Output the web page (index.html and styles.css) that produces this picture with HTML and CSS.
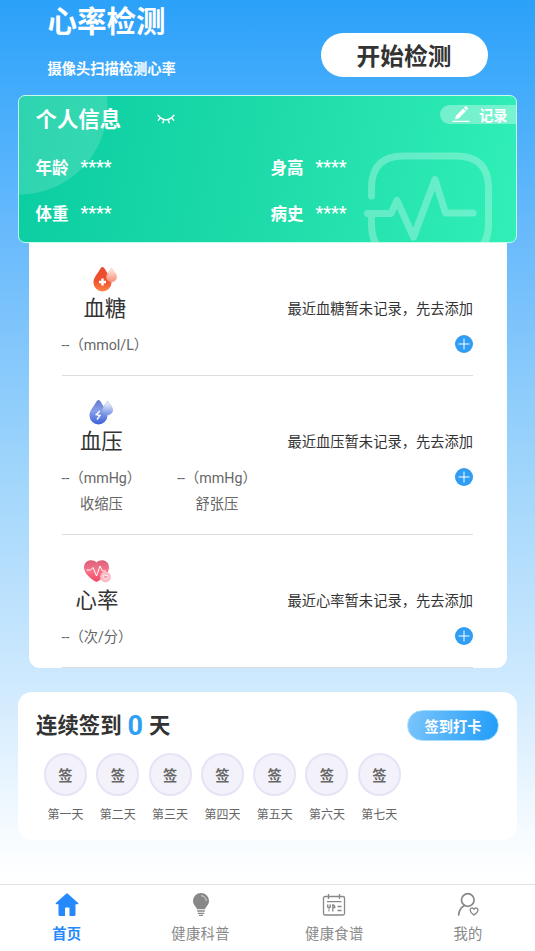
FILE: index.html
```html
<!DOCTYPE html>
<html lang="zh-CN">
<head>
<meta charset="utf-8">
<title>心率检测</title>
<link rel="stylesheet" href="styles.css">
</head>
<body>
<div class="app">
  <header class="header">
    <div>
      <h1 class="header-title">心率检测</h1>
      <p class="header-sub">摄像头扫描检测心率</p>
    </div>
    <button class="start">开始检测</button>
  </header>

  <section class="profile">
    <svg class="profile-art" viewBox="0 0 128 90" fill="none" stroke="#fff" stroke-opacity=".28" stroke-width="7" stroke-linecap="round" stroke-linejoin="round">
      <path d="M7.500 44V36Q7.500 4 39.500 4H92Q124.500 4 124.500 36V72Q124.500 104 92 104H39.500Q7.500 104 7.500 72V61.500H3.500M7.500 61.500H27L33 48.500L49.500 85L71 27.500L81.500 61H109"/>
    </svg>
    <div class="profile-head">
      <h2 class="profile-title">个人信息</h2>
      <svg class="eye" viewBox="0 0 18 11" fill="none" stroke="#fff" stroke-width="1.400" stroke-linecap="round"><path d="M1 1.300Q9 10.500 17 1.300M3.300 3.600L1.300 6.300M6.900 5.500L5.900 8.800M11.100 5.500L12.100 8.800M14.700 3.600L16.700 6.300"/></svg>
      <div class="record">
        <svg class="pen" viewBox="0 0 18 17"><path fill="#fff" d="M3 13.500L4 9.700L11.300 2.400L14 5.100L6.700 12.500ZM12 1.700L13.200.5Q14 0 14.700.7L15.800 1.800Q16.300 2.500 15.700 3.200L14.600 4.300ZM.5 14.800H17.500V16H.5Z"/></svg>
        <span>记录</span>
      </div>
    </div>
    <div class="profile-grid">
      <div class="field"><span>年龄</span><span class="mask">****</span></div>
      <div class="field"><span>身高</span><span class="mask">****</span></div>
      <div class="field"><span>体重</span><span class="mask">****</span></div>
      <div class="field"><span>病史</span><span class="mask">****</span></div>
    </div>
  </section>

  <section class="metrics">
    <article class="metric">
      <div class="metric-main">
        <svg class="metric-icon" viewBox="0 0 26 27">
          <defs>
            <linearGradient id="r1" x1="0" y1="0" x2="0" y2="1"><stop offset="0" stop-color="#e9492f"/><stop offset=".6" stop-color="#f0532f"/><stop offset="1" stop-color="#ff8547"/></linearGradient>
            <linearGradient id="r2" x1="0" y1="0" x2="0" y2="1"><stop offset="0" stop-color="#fff1eb"/><stop offset="1" stop-color="#f78b72"/></linearGradient>
          </defs>
          <path fill="url(#r1)" d="M10.500 1Q12 1 14 5C16.500 9 19.500 12 19.500 16.500A9 9 0 0 1 1.500 16.500C1.500 12 4.500 9 7 5Q9 1 10.500 1Z"/>
          <path fill="url(#r2)" stroke="#f7a08c" stroke-width=".4" d="M19.500 2C20.500 4.500 24.700 7.500 24.700 11A5.100 5.100 0 0 1 14.500 11C14.500 7.500 18.500 4.500 19.500 2Z"/>
          <path d="M10.500 12.500V19.500M7 16H14" stroke="#fff" stroke-width="2.400"/>
        </svg>
        <h3 class="metric-name">血糖</h3>
        <div class="metric-value">--（mmol/L）</div>
      </div>
      <div class="metric-side"><span>最近血糖暂未记录，先去添加</span><svg class="plus" viewBox="0 0 18 18"><circle cx="9" cy="9" r="9" fill="#2e9df3"/><path d="M9 3.500V14.500M3.500 9H14.500" stroke="#fff" stroke-width="1"/></svg></div>
    </article>
    <article class="metric">
      <div class="metric-columns">
        <div class="metric-main">
          <svg class="metric-icon" viewBox="0 0 26 27">
            <defs>
              <linearGradient id="b1" x1="0" y1="0" x2="0" y2="1"><stop offset="0" stop-color="#6479ce"/><stop offset=".45" stop-color="#88a0ea"/><stop offset="1" stop-color="#3a61da"/></linearGradient>
              <linearGradient id="b2" x1="0" y1="0" x2="0" y2="1"><stop offset="0" stop-color="#fff"/><stop offset="1" stop-color="#718fe3"/></linearGradient>
            </defs>
            <path fill="url(#b1)" d="M10.500 1Q12 1 14 5C16.500 9 19.500 12 19.500 16.500A9 9 0 0 1 1.500 16.500C1.500 12 4.500 9 7 5Q9 1 10.500 1Z"/>
            <path fill="url(#b2)" stroke="#92a7e5" stroke-width=".5" d="M19.500 2C20.500 4.500 24.700 7.500 24.700 11A5.100 5.100 0 0 1 14.500 11C14.500 7.500 18.500 4.500 19.500 2Z"/>
            <path d="M11.800 12L8.300 15.700L12 16.500L9 20.500" fill="none" stroke="#fff" stroke-width="1.400"/>
          </svg>
          <h3 class="metric-name">血压</h3>
          <div class="metric-value">--（mmHg）</div>
          <div class="metric-label">收缩压</div>
        </div>
        <div class="metric-main metric-second">
          <div class="metric-value">--（mmHg）</div>
          <div class="metric-label">舒张压</div>
        </div>
      </div>
      <div class="metric-side"><span>最近血压暂未记录，先去添加</span><svg class="plus" viewBox="0 0 18 18"><circle cx="9" cy="9" r="9" fill="#2e9df3"/><path d="M9 3.500V14.500M3.500 9H14.500" stroke="#fff" stroke-width="1"/></svg></div>
    </article>
    <article class="metric">
      <div class="metric-main">
        <svg class="metric-icon heart" viewBox="0 0 28 25">
          <defs><linearGradient id="h1" x1="0" y1="0" x2="0" y2="1"><stop offset="0" stop-color="#d9617a"/><stop offset=".5" stop-color="#f9768a"/><stop offset="1" stop-color="#f24563"/></linearGradient></defs>
          <path fill="url(#h1)" d="M13.500 3.500C17 -.5 26 .5 26 8.500C26 14.500 19 20 14.500 22.500Q13.500 23 12.500 22.500C8 20 1 14.500 1 8.500C1 .5 10 -.5 13.500 3.500Z"/>
          <path d="M3.500 11H7.500L10 8.500L13.500 17L17 7L19.500 12H23" fill="none" stroke="#fff" stroke-width="1"/>
          <circle cx="22.500" cy="18" r="5.400" fill="#fbbcc5"/>
          <path d="M20.300 17.700Q19.800 15.700 21.800 16.200L22.800 16.700Q24.800 15.500 25.300 17.200Q25.300 19.200 22.600 20.200Q20.800 19.700 20.300 17.700Z" fill="#f99caa" stroke="#fff" stroke-width=".8"/>
        </svg>
        <h3 class="metric-name">心率</h3>
        <div class="metric-value">--（次/分）</div>
      </div>
      <div class="metric-side"><span>最近心率暂未记录，先去添加</span><svg class="plus" viewBox="0 0 18 18"><circle cx="9" cy="9" r="9" fill="#2e9df3"/><path d="M9 3.500V14.500M3.500 9H14.500" stroke="#fff" stroke-width="1"/></svg></div>
    </article>
  </section>

  <section class="checkin">
    <div class="checkin-head">
      <h2 class="checkin-title">连续签到<b>0</b>天</h2>
      <button class="checkin-button">签到打卡</button>
    </div>
    <div class="days">
      <div class="day"><i>签</i><span>第一天</span></div>
      <div class="day"><i>签</i><span>第二天</span></div>
      <div class="day"><i>签</i><span>第三天</span></div>
      <div class="day"><i>签</i><span>第四天</span></div>
      <div class="day"><i>签</i><span>第五天</span></div>
      <div class="day"><i>签</i><span>第六天</span></div>
      <div class="day"><i>签</i><span>第七天</span></div>
    </div>
  </section>

  <nav class="tabs">
    <a class="tab active">
      <svg viewBox="0 0 26 26"><path fill="#2589fc" d="M12.200 1.700Q13 1 13.800 1.700L24.200 11Q25 12 23.500 12.300H21.500V22.500Q21.500 24 20 24H15.500V16.500Q15.500 15.500 14.500 15.500H12Q11 15.500 11 16.500V24H6Q4.500 24 4.500 22.500V12.300H2.500Q1 12 1.800 11Z"/></svg>
      <span>首页</span>
    </a>
    <a class="tab">
      <svg viewBox="0 0 26 26"><path fill="#888" d="M13 1A8 8 0 0 1 21 9C21 13 17.700 14.500 17 17.300H9C8.300 14.500 5 13 5 9A8 8 0 0 1 13 1Z"/><path d="M13.500 3.700Q17.800 4.200 18.300 8.500" fill="none" stroke="#ddd" stroke-width="1" stroke-linecap="round"/><path d="M9.200 19H16.800M9.800 21.300H16.200M11 23.300H15" stroke="#888" stroke-width="1.300"/></svg>
      <span>健康科普</span>
    </a>
    <a class="tab">
      <svg viewBox="0 0 26 26" fill="none" stroke="#888" stroke-width="1.300"><rect x="2.500" y="4.500" width="21" height="18.500" rx="1.500"/><path d="M7.500 2V7M18.500 2V7M6 9.700H20.500M16.500 14.500H20.500M16.500 18.500H20.500M11.800 19.500V12.800Q14 13 13.800 15.500H11.800"/><path d="M6.500 12.500V15.500H9.500V12.500M8 12.500V19.500" stroke-width="1"/></svg>
      <span>健康食谱</span>
    </a>
    <a class="tab">
      <svg viewBox="0 0 26 26" fill="none" stroke="#888" stroke-width="1.700" stroke-linecap="round"><circle cx="12.800" cy="8" r="6.300"/><path d="M9.500 13.500Q4 16.500 3.700 23"/><path stroke-width="1.400" d="M19 17.200C17.500 14.800 14.800 16.200 15.200 18.500C15.500 20.800 17.500 22 19 23C20.500 22 22.700 20.800 22.900 18.500C23.200 16.200 20.500 14.800 19 17.200Z"/></svg>
      <span>我的</span>
    </a>
  </nav>
</div>
</body>
</html>
```
FILE: styles.css
```css
* { box-sizing: border-box; }
body, h1, h2, h3, p { margin: 0; }
body {
  font-family: "Noto Sans CJK SC", sans-serif;
  font-size: 14.27px;
  color: #333;
}
button { border: 0; padding: 0; font-family: inherit; }
.app {
  height: 951px;
  overflow: hidden;
  display: flex;
  flex-direction: column;
  background: linear-gradient(180deg, #2ba1f9 0, #44acfb 95px, #6bbbfc 243px, #a1d6fb 480px, #cee9fe 680px, #fafdff 850px, #fff 884px);
}
.header {
  height: 95px;
  flex: none;
  display: flex;
  justify-content: space-between;
  padding: 0 47.500px;
}
.header-title { font-size: 29.500px; line-height: 38px; font-weight: 700; color: #fff; }
.header-sub { margin-top: 20px; line-height: 20px; font-weight: 700; color: #fff; }
.start {
  width: 167px;
  height: 44px;
  margin-top: 33px;
  border-radius: 22px;
  background: #fff;
  color: #333;
  font-size: 23.700px;
  line-height: 44px;
  font-weight: 700;
}
.profile {
  position: relative;
  flex: none;
  height: 148px;
  margin: 0 18px;
  border: 1.500px solid #c5fbe9;
  border-radius: 7px;
  overflow: hidden;
  background:
    radial-gradient(circle 89px at 0 10px, rgba(255,255,255,.15) 88px, transparent 89px),
    linear-gradient(100deg, #0acda2, #1edba9 50%, #31efb7);
  color: #fff;
}
.profile-art { position: absolute; right: 24px; bottom: 0; width: 128px; height: 90px; }
.profile-head { display: flex; align-items: flex-start; padding-left: 16.500px; height: 48px; }
.profile-title { margin-top: 7px; font-size: 21.400px; line-height: 30px; font-weight: 700; }
.eye { width: 18px; height: 11px; margin: 18px 0 0 36px; }
.record {
  display: flex;
  align-items: center;
  gap: 9px;
  width: 76px;
  height: 19px;
  margin: 9px 0 0 auto;
  padding-left: 12px;
  border-radius: 10px 0 0 10px;
  background: rgba(255,255,255,.35);
  font-weight: 700;
  line-height: 19px;
}
.pen { width: 18px; height: 17px; }
.profile-grid { display: grid; grid-template-columns: 235px 1fr; grid-auto-rows: 46px; padding-left: 16.500px; }
.field { display: flex; gap: 12px; align-items: center; font-size: 16.500px; font-weight: 700; }
.mask { font-family: Roboto, sans-serif; font-size: 17.500px; line-height: 20px; font-weight: 500; }
.metrics {
  flex: none;
  height: 425px;
  margin: 0 28.500px;
  padding: 0 33.500px 0 33px;
  border-radius: 0 0 11px 11px;
  background: #fff;
}
.metric {
  display: flex;
  justify-content: space-between;
  height: 133px;
  padding-top: 23px;
  border-bottom: 1px solid #ddd;
}
.metric:nth-child(2) { height: 159px; }
.metric-columns { display: flex; gap: 36px; }
.metric-main { display: flex; flex-direction: column; align-items: center; }
.metric-second { padding-top: 57px; }
.metric-icon { width: 26px; height: 27px; }
.metric-icon.heart { width: 28px; }
.metric-name { margin-top: -1px; font-size: 21.400px; line-height: 30px; font-weight: 400; }
.metric-value { margin-top: 13px; line-height: 20px; color: #666; white-space: nowrap; font-family: Roboto, "Noto Sans CJK SC", sans-serif; }
.metric-main.metric-second .metric-value { margin-top: 12px; }
.metric-label { margin-top: 5px; line-height: 20px; color: #666; }
.metric-side { display: flex; flex-direction: column; align-items: flex-end; padding-top: 27px; line-height: 30px; }
.plus { width: 18px; height: 18px; margin-top: 12px; }
.checkin { flex: none; height: 148px; margin: 24px 18px 0; padding: 0 18px; border-radius: 14px; background: #fff; }
.checkin-head { display: flex; justify-content: space-between; height: 61px; }
.checkin-title { margin-top: 14px; font-size: 21.400px; line-height: 36px; font-weight: 700; }
.checkin-title b { margin: 0 6px; font-family: Roboto, sans-serif; font-size: 27px; line-height: 30px; font-weight: 700; color: #2e9ff5; vertical-align: -2px; }
.checkin-button {
  width: 92px;
  height: 31px;
  margin-top: 18px;
  border: 1px solid #a5defb;
  border-radius: 16px;
  background: linear-gradient(100deg, #7bc4fb, #219df8);
  color: #fff;
  font-size: 14.270px;
  line-height: 28px;
  font-weight: 700;
}
.days { display: flex; gap: 8.300px; padding-left: 7.500px; }
.day { width: 44px; display: flex; flex-direction: column; align-items: center; }
.day i {
  width: 43px;
  height: 43px;
  border: 2px solid #e5e3f5;
  border-radius: 50%;
  background: #f3f2fa;
  color: #666;
  font-style: normal;
  font-weight: 700;
  line-height: 39px;
  text-align: center;
}
.day span { margin-top: 9px; font-size: 12px; line-height: 18px; color: #666; }
.tabs { flex: none; display: flex; height: 67px; margin-top: 44px; border-top: 1px solid #e1e3e5; background: #fff; }
.tab { flex: 1; display: flex; flex-direction: column; align-items: center; padding-top: 7px; line-height: 20px; color: #888; letter-spacing: .4px; }
.tab svg { width: 26px; height: 26px; }
.tab span { margin-top: 5px; }
.tab.active { color: #2589fc; font-weight: 700; }
```
